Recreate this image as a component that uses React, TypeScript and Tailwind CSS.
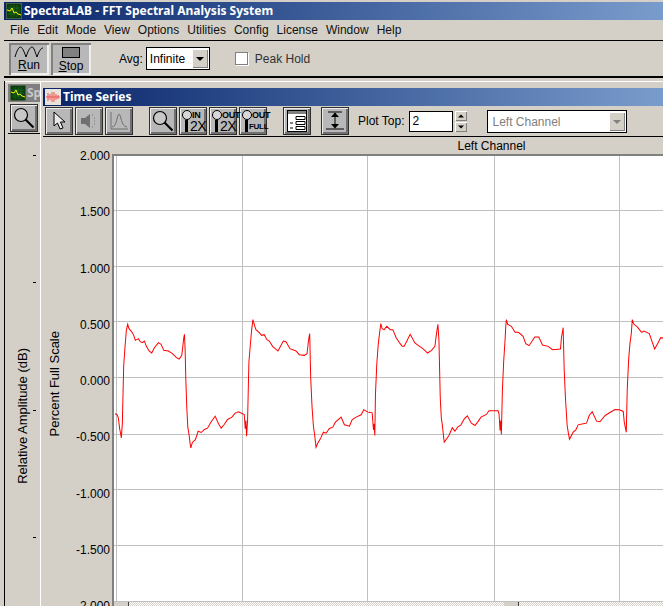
import type { ReactNode } from 'react'

const sans = 'font-["Liberation_Sans",Arial,sans-serif]'

// traced from the reference, in zoomed coordinates (3x from an x origin and y=300)
const traceA = [
  [48, 340], [54, 342], [58, 352], [62, 385], [65, 400], [67, 412], [70, 368], [72, 282], [74, 196], [78, 140], [82, 90], [86, 72], [90, 85],
  [100, 97], [104, 105], [109, 120], [118, 115], [124, 124], [130, 127], [136, 122], [142, 138], [150, 152], [158, 158], [166, 142], [178, 127],
  [186, 132], [194, 150], [208, 152], [220, 160], [232, 172], [240, 176], [248, 165], [252, 130], [254, 112], [256, 102], [258, 148], [260, 235],
  [263, 322], [266, 380], [270, 405], [273, 430], [275, 442], [280, 425], [288, 418], [292, 408], [297, 392], [306, 396], [316, 387], [325, 383],
  [335, 365], [348, 347], [358, 370], [366, 383], [375, 372], [385, 357], [398, 350], [408, 338], [418, 334], [435, 342], [438, 385], [440, 360],
  [442, 407], [445, 360], [447, 272], [449, 184], [454, 125], [457, 90], [461, 58], [465, 72], [470, 88], [480, 97], [487, 105], [495, 103],
  [503, 118], [510, 122], [520, 138], [536, 152], [552, 122], [560, 124], [572, 145], [590, 152], [600, 163], [615, 165], [623, 160], [627, 125],
  [629, 110], [631, 100], [634, 232], [638, 318], [642, 375], [646, 405], [650, 440], [655, 428], [663, 415], [672, 395], [680, 398], [690, 384],
  [700, 380], [708, 365], [725, 350], [735, 373], [750, 377], [758, 358], [770, 350], [785, 343], [793, 328], [805, 335], [810, 336],
]
const traceB = [
  [0, 335], [8, 337], [12, 388], [14, 370], [16, 405], [18, 280], [22, 190], [26, 135], [30, 100], [34, 70], [38, 85], [44, 88], [52, 78], [62, 88],
  [70, 88], [80, 112], [92, 130], [98, 138], [104, 138], [122, 102], [136, 128], [150, 138], [160, 145], [174, 158], [186, 150], [196, 138],
  [200, 105], [203, 85], [205, 72], [208, 118], [210, 205], [212, 292], [215, 350], [219, 380], [222, 410], [224, 425], [238, 405], [248, 382],
  [256, 392], [264, 380], [274, 373], [284, 355], [293, 346], [305, 368], [316, 375], [326, 362], [334, 350], [350, 342], [358, 331], [385, 331],
  [388, 340], [391, 390], [393, 360], [395, 402], [398, 270], [402, 182], [406, 120], [408, 80], [410, 58], [414, 72], [425, 78], [436, 96],
  [446, 96], [460, 108], [468, 130], [478, 136], [495, 110], [507, 110], [518, 134], [535, 138], [548, 148], [572, 146], [575, 110], [578, 95],
  [580, 82], [583, 205], [587, 295], [592, 375], [596, 400], [599, 416], [610, 395], [618, 388], [625, 373], [640, 370], [650, 368], [658, 345],
  [667, 334], [680, 362], [690, 364], [706, 345], [720, 336], [735, 327], [748, 328], [760, 333], [763, 365], [767, 385], [769, 395], [772, 265],
  [776, 180], [780, 130], [784, 100], [787, 58], [792, 72], [802, 80], [815, 96], [822, 92], [838, 100], [845, 120], [854, 146], [864, 128],
  [872, 112], [879, 113],
]

const tracePoints = [
  ...traceA.map(([x, y]) => `${100 + x / 3 - 115},${300 + y / 3 - 156}`),
  ...traceB.map(([x, y]) => `${370 + x / 3 - 115},${300 + y / 3 - 156}`),
].join(' ')

const gridX = [3, 129, 254, 380, 505]
const gridY = [55, 111, 166, 222, 278, 333, 389, 445]

function ToolButton({ children, className = '' }: { children: ReactNode; className?: string }) {
  return (
    <div
      className={`flex h-[28px] w-[28px] shrink-0 items-center justify-center border border-[#303030] bg-[#b8b8b8] shadow-[inset_1px_1px_0_#ececec,inset_-2px_-2px_0_#707070] ${className}`}
    >
      {children}
    </div>
  )
}

function Magnifier({ size = 22 }: { size?: number }) {
  return (
    <svg width={size} height={size} viewBox="0 0 22 22" fill="none">
      <circle cx="8" cy="8" r="6.5" fill="#c8c8c8" stroke="#000" strokeWidth="1.2" />
      <path d="M12.5 12.5 L20.5 20.5" stroke="#000" strokeWidth="2.2" />
    </svg>
  )
}

// magnifier with a word on top and below, used by the zoom in/out buttons
function ZoomIcon({ top, bottom, small }: { top: string; bottom: string; small?: boolean }) {
  return (
    <div className="relative h-[24px] w-[24px]">
      <svg width="24" height="24" viewBox="0 0 24 24" fill="none" className="absolute top-0 left-0">
        <circle cx="6" cy="6" r="4.5" fill="#d8d8d8" stroke="#000" />
        <path d="M5.5 11 L5.5 23" stroke="#000" strokeWidth="3" />
      </svg>
      <span className={`absolute top-[2px] left-[11px] text-[9px] leading-[9px] font-bold tracking-[-0.3px] text-black ${sans}`}>{top}</span>
      <span
        className={`absolute bottom-[0px] leading-[13px] text-black ${sans} ${small ? 'left-[8px] text-[8px] font-bold tracking-[-0.3px]' : 'left-[9px] text-[14px] tracking-[-0.5px]'}`}
      >
        {bottom}
      </span>
    </div>
  )
}

function ArrowBox({ className = '', up }: { className?: string; up?: boolean }) {
  return (
    <div
      className={`flex h-[10px] w-[12px] items-center justify-center bg-[#d4d0c8] shadow-[inset_1px_1px_0_#fff,inset_-1px_-1px_0_#808080] ${className}`}
    >
      <svg width="6" height="4" viewBox="0 0 6 4">
        <path d={up ? 'M3 0.5 L6 3.5 L0 3.5 Z' : 'M0 0.5 L6 0.5 L3 3.5 Z'} fill="#000" />
      </svg>
    </div>
  )
}

function TitleBar({ text, icon, className = '' }: { text: string; icon: ReactNode; className?: string }) {
  return (
    <div className={`flex h-[18px] shrink-0 items-center gap-[2px] bg-gradient-to-r from-[#0a246a] to-[#7a9ccc] pl-[2px] ${className}`}>
      {icon}
      <span className='font-["Noto_Sans",sans-serif] text-[12px] font-bold whitespace-nowrap text-white'>{text}</span>
    </div>
  )
}

function ScopeIcon() {
  return (
    <svg width="16" height="16" viewBox="0 0 16 16" className="shrink-0">
      <rect width="16" height="16" fill="#0c3c0c" stroke="#808080" />
      <path d="M2 5H14M2 8H14M2 11H14M5 2V14M8 2V14M11 2V14" stroke="#1e7a1e" strokeWidth="0.6" />
      <path d="M1 7 L4 8 L6 5 L8 10 L10 9 L12 11 L15 12" stroke="#f4f000" fill="none" />
    </svg>
  )
}

function PulseIcon() {
  return (
    <svg width="16" height="16" viewBox="0 0 16 16" className="shrink-0">
      <rect width="16" height="16" fill="#e8e4dc" />
      <path d="M1 8H15M3 4V12M5 5V11M7 3V13M9 3V13M11 5V11M13 6V10" stroke="#f05050" />
    </svg>
  )
}

const menus = ['File', 'Edit', 'Mode', 'View', 'Options', 'Utilities', 'Config', 'License', 'Window', 'Help']
const scale = ['2.000', '1.500', '1.000', '0.500', '0.000', '-0.500', '-1.000', '-1.500', '-2.000']

export default function App() {
  return (
    <div className={`flex h-[606px] w-[663px] flex-col overflow-hidden bg-[#d4d0c8] pt-[2px] pl-[4px] text-[12px] text-black ${sans}`}>
      <TitleBar text="SpectraLAB - FFT Spectral Analysis System" icon={<ScopeIcon />} />

      <div className="flex h-[20px] shrink-0 items-center gap-[8px] pl-[6px] text-[#101010]">
        {menus.map((m) => (
          <span key={m}>{m}</span>
        ))}
      </div>

      <div className="flex h-[36px] shrink-0 items-center border-t border-black pl-[5px]">
        <div className="flex h-[32px] w-[40px] flex-col items-center justify-center bg-[#b8b8b8] shadow-[inset_2px_2px_0_#808080,inset_-2px_-2px_0_#eeeeee]">
          <svg width="30" height="14" viewBox="0 0 30 14" fill="none">
            <path d="M1 12 C3 5 5 2 6.5 2 C8 2 10 6 12 12 C14 6 16 2 18 2 C20 2 21 7 23 12 C25 6 27 3 29 3" stroke="#000" />
          </svg>
          <span className="text-[12px] leading-[13px]"><u>R</u>un</span>
        </div>
        <div className="ml-[2px] flex h-[32px] w-[40px] flex-col items-center justify-center bg-[#b8b8b8] pt-[2px] shadow-[inset_2px_2px_0_#808080,inset_-2px_-2px_0_#eeeeee]">
          <div className="h-[11px] w-[18px] border border-black bg-[#808080]" />
          <span className="mt-[2px] text-[12px] leading-[13px]"><u>S</u>top</span>
        </div>
        <span className="ml-[28px]">Avg:</span>
        <div className="ml-[3px] flex h-[23px] w-[64px] items-center border border-black bg-white pl-[3px]">
          <span className="flex-1">Infinite</span>
          <div className="mr-[1px] flex h-[19px] w-[16px] items-center justify-center bg-[#d4d0c8] shadow-[inset_1px_1px_0_#fff,inset_-1px_-1px_0_#808080]">
            <svg width="8" height="4" viewBox="0 0 8 4"><path d="M0 0H8L4 4Z" fill="#000" /></svg>
          </div>
        </div>
        <div className="ml-[25px] h-[13px] w-[13px] border border-[#808080] bg-white shadow-[1px_1px_0_#fff]" />
        <span className="ml-[7px] text-[#303030]">Peak Hold</span>
      </div>

      <div className="h-[2px] shrink-0 bg-black" />

      <div className="flex min-h-0 flex-1 pt-[3px]">
        <div className="w-[1px] bg-black" />
        <div className="flex min-h-0 flex-1 flex-col border-t border-[#ffffff] pl-[3px]">
          <div className="flex min-h-0 flex-1">
            {/* window behind, only its left edge shows */}
            <div className="flex w-[32px] shrink-0 flex-col pt-[2px]">
              <div className="flex h-[18px] shrink-0 items-center gap-[1px] overflow-hidden bg-[#808080] pl-[2px] font-['Noto_Sans',sans-serif] text-[12px] font-bold text-[#c8c8c8]">
                <ScopeIcon />
                Sp
              </div>
              <ToolButton className="mt-[2px] ml-[2px]"><Magnifier /></ToolButton>
              <div className="mt-[1px] h-[1px] shrink-0 bg-black" />
              <div className="relative min-h-0 flex-1">
                <div className="absolute top-[21px] right-[4px] h-[1px] w-[3px] bg-black" />
                <div className="absolute top-[148px] right-[4px] h-[1px] w-[3px] bg-black" />
                <div className="absolute top-[276px] right-[4px] h-[1px] w-[3px] bg-black" />
                <div className="absolute top-[403px] right-[4px] h-[1px] w-[3px] bg-black" />
                <div className="flex h-full items-center pt-[92px] pl-[5px]">
                  <span className="rotate-180 text-[13px] whitespace-nowrap [writing-mode:vertical-rl]">Relative Amplitude (dB)</span>
                </div>
              </div>
            </div>

            <div className="flex min-w-0 flex-1 flex-col border-l border-white pt-[6px] pl-[2px]">
              <TitleBar text="Time Series" icon={<PulseIcon />} />

              <div className="flex h-[31px] shrink-0 items-center border-b border-black pl-[2px]">
                <ToolButton>
                  <svg width="16" height="20" viewBox="0 0 16 20">
                    <path d="M3 1 L3 15 L6.5 12 L9 18 L12 17 L9.5 11 L14 11 Z" fill="#e8e8e8" stroke="#000" />
                  </svg>
                </ToolButton>
                <ToolButton className="ml-[2px]">
                  <svg width="18" height="18" viewBox="0 0 18 18">
                    <path d="M1 6H5L10 2V16L5 12H1Z" fill="#707070" />
                    <path d="M12 3h1M14 6h1M14 9h1M14 12h1M12 15h1" stroke="#707070" />
                  </svg>
                </ToolButton>
                <ToolButton className="ml-[2px]">
                  <svg width="20" height="20" viewBox="0 0 20 20" fill="none">
                    <path d="M2 1V18H19M3 16C8 16 8 3 10 3S12 16 18 16" stroke="#707070" />
                  </svg>
                </ToolButton>
                <ToolButton className="ml-[16px]"><Magnifier /></ToolButton>
                <ToolButton className="ml-[2px]"><ZoomIcon top="IN" bottom="2X" /></ToolButton>
                <ToolButton className="ml-[2px]"><ZoomIcon top="OUT" bottom="2X" /></ToolButton>
                <ToolButton className="ml-[2px]"><ZoomIcon top="OUT" bottom="FULL" small /></ToolButton>
                <ToolButton className="ml-[16px]">
                  <svg width="20" height="22" viewBox="0 0 20 22">
                    <rect x="0.5" y="0.5" width="19" height="21" fill="#fff" stroke="#000" />
                    <rect x="1" y="1" width="18" height="3" fill="#808080" />
                    <path d="M9 6.5H18V9.5H9ZM9 11.5H18V14.5H9ZM9 16.5H18V19.5H9Z" fill="#fff" stroke="#000" />
                    <path d="M3 13H6M3 18H6" stroke="#000" />
                  </svg>
                </ToolButton>
                <ToolButton className="ml-[10px]">
                  <svg width="20" height="22" viewBox="0 0 20 22" fill="none">
                    <path d="M1 19H19M10 3V17M3 2H17" stroke="#000" />
                    <path d="M6 7L10 2.5L14 7ZM6 14L10 18.5L14 14Z" fill="#000" />
                  </svg>
                </ToolButton>
                <span className="ml-[9px] whitespace-nowrap">Plot Top:</span>
                <div className="ml-[5px] h-[21px] w-[44px] border border-black bg-white pl-[2px] leading-[18px]">2</div>
                <div className="ml-[2px] flex flex-col gap-[1px]">
                  <ArrowBox up />
                  <ArrowBox />
                </div>
                <div className="mt-[1px] ml-[20px] flex h-[23px] w-[140px] items-center border border-black bg-white pl-[4px] text-[#808080]">
                  <span className="flex-1">Left Channel</span>
                  <div className="mr-[1px] flex h-[19px] w-[16px] items-center justify-center bg-[#d4d0c8] shadow-[inset_1px_1px_0_#fff,inset_-1px_-1px_0_#808080]">
                    <svg width="8" height="4" viewBox="0 0 8 4"><path d="M0 0H8L4 4Z" fill="#808080" /></svg>
                  </div>
                </div>
              </div>

              <div className="flex h-[17px] shrink-0 items-center justify-center pl-[277px]">Left Channel</div>

              <div className="flex min-h-0 flex-1">
                <div className="flex w-[24px] shrink-0 items-center justify-center pt-[8px]">
                  <span className="rotate-180 text-[13px] whitespace-nowrap [writing-mode:vertical-rl]">Percent Full Scale</span>
                </div>
                <div className="-mt-[4px] -mb-[6px] flex w-[43px] shrink-0 flex-col items-end justify-between">
                  {scale.map((s) => (
                    <span key={s} className="h-[12px] leading-[12px]">{s}</span>
                  ))}
                </div>
                <div className="w-[2px] shrink-0" />
                <div className="flex min-w-0 flex-1 flex-col border-t-2 border-l-2 border-[#808080]">
                  <svg className="block min-h-0 w-full flex-1 bg-white" viewBox="0 0 548 446" preserveAspectRatio="xMinYMin slice">
                    {gridX.map((x) => (
                      <line key={x} x1={x - 0.5} x2={x - 0.5} y1="0" y2="446" stroke="#c0c0c0" shapeRendering="crispEdges" />
                    ))}
                    {gridY.map((y) => (
                      <line key={y} x1="0" x2="548" y1={y - 0.5} y2={y - 0.5} stroke="#c0c0c0" shapeRendering="crispEdges" />
                    ))}
                    <polyline points={tracePoints} fill="none" stroke="#ff0000" strokeWidth="1" />
                  </svg>
                  <div className="flex h-[4px] shrink-0 bg-[repeating-conic-gradient(#d4d0c8_0_25%,#ffffff_0_50%)] bg-[length:2px_2px]">
                    <div className="w-[15px] border-r border-[#404040] bg-[#d4d0c8]" />
                    <div className="ml-[375px] w-[15px] border-r border-[#404040] bg-[#d4d0c8]" />
                  </div>
                </div>
              </div>
            </div>
          </div>
        </div>
      </div>
    </div>
  )
}
